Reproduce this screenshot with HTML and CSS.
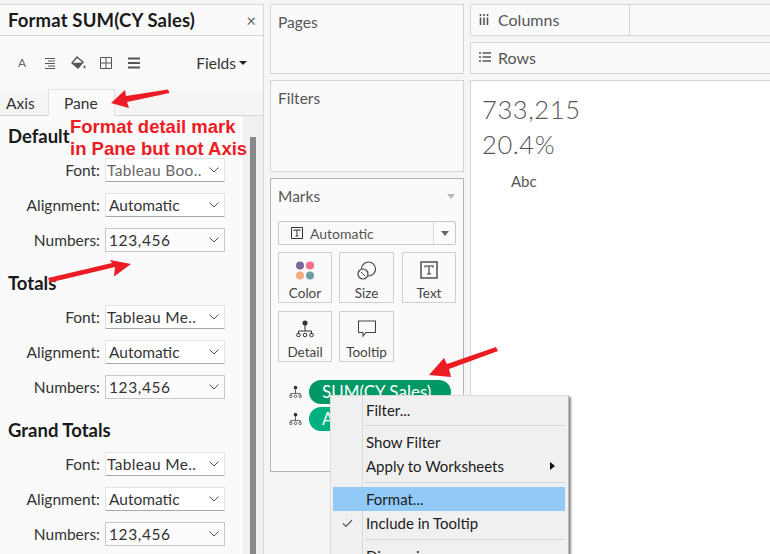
FILE: index.html
```html
<!DOCTYPE html>
<html lang="en">
<head>
<meta charset="utf-8">
<title>Format SUM(CY Sales)</title>
<link rel="stylesheet" href="styles.css">
</head>
<body>
<div class="app">
  <aside class="format">
    <header class="format-head"><h1>Format SUM(CY Sales)</h1><span class="close">×</span></header>
    <div class="tools">
      <span class="tool-box tool-a">A</span>
      <span class="tool-box"><svg width="12" height="12" viewBox="0 0 12 12"><path d="M1 1.500h10M4 4h7M1 6.500h10M4 9h7M1 11.500h10" stroke="#555" fill="none"/></svg></span>
      <span class="tool-box"><svg width="15" height="14" viewBox="0 0 15 14"><path d="M6 1l6 5-5 6-6-5z" fill="none" stroke="#555" stroke-width="1.400"/><path d="M1.500 7l10.500-.5-5 5.500z" fill="#555"/><path d="M13.500 9c.8 1.200 1 1.600 1 2.200a1 1 0 0 1-2 0c0-.6.2-1 1-2.200z" fill="#555"/></svg></span>
      <span class="tool-box"><svg width="12" height="12" viewBox="0 0 12 12"><path d="M.5.500h11v11H.5zM6 .5v11M.5 6h11" stroke="#555" fill="none"/></svg></span>
      <span class="tool-box"><svg width="12" height="12" viewBox="0 0 12 12"><path d="M0 1.500h12M0 6h12M0 10.500h12" stroke="#555" stroke-width="2" fill="none"/></svg></span>
      <span class="fields">Fields<i class="caret"></i></span>
    </div>
    <nav class="tabs"><span class="tab">Axis</span><span class="tab tab-on">Pane</span></nav>
    <div class="format-body">
      <div class="sections">
        <section class="sec">
          <h2>Default</h2>
          <div class="row"><label>Font:</label><div class="sel sel-font"><span class="muted">Tableau Boo..</span><svg class="chev" width="10" height="6" viewBox="0 0 10 6"><path d="M.5.500L5 5l4.500-4.500" fill="none" stroke="#555"/></svg></div></div>
          <div class="row"><label>Alignment:</label><div class="sel"><span>Automatic</span><svg class="chev" width="10" height="6" viewBox="0 0 10 6"><path d="M.5.500L5 5l4.500-4.500" fill="none" stroke="#555"/></svg></div></div>
          <div class="row"><label>Numbers:</label><div class="sel sel-box"><span>123,456</span><svg class="chev" width="10" height="6" viewBox="0 0 10 6"><path d="M.5.500L5 5l4.500-4.500" fill="none" stroke="#555"/></svg></div></div>
        </section>
        <section class="sec">
          <h2>Totals</h2>
          <div class="row"><label>Font:</label><div class="sel sel-font"><span>Tableau Me..</span><svg class="chev" width="10" height="6" viewBox="0 0 10 6"><path d="M.5.500L5 5l4.500-4.500" fill="none" stroke="#555"/></svg></div></div>
          <div class="row"><label>Alignment:</label><div class="sel"><span>Automatic</span><svg class="chev" width="10" height="6" viewBox="0 0 10 6"><path d="M.5.500L5 5l4.500-4.500" fill="none" stroke="#555"/></svg></div></div>
          <div class="row"><label>Numbers:</label><div class="sel sel-box"><span>123,456</span><svg class="chev" width="10" height="6" viewBox="0 0 10 6"><path d="M.5.500L5 5l4.500-4.500" fill="none" stroke="#555"/></svg></div></div>
        </section>
        <section class="sec">
          <h2>Grand Totals</h2>
          <div class="row"><label>Font:</label><div class="sel sel-font"><span>Tableau Me..</span><svg class="chev" width="10" height="6" viewBox="0 0 10 6"><path d="M.5.500L5 5l4.500-4.500" fill="none" stroke="#555"/></svg></div></div>
          <div class="row"><label>Alignment:</label><div class="sel"><span>Automatic</span><svg class="chev" width="10" height="6" viewBox="0 0 10 6"><path d="M.5.500L5 5l4.500-4.500" fill="none" stroke="#555"/></svg></div></div>
          <div class="row"><label>Numbers:</label><div class="sel sel-box"><span>123,456</span><svg class="chev" width="10" height="6" viewBox="0 0 10 6"><path d="M.5.500L5 5l4.500-4.500" fill="none" stroke="#555"/></svg></div></div>
        </section>
      </div>
      <div class="track"><div class="thumb"></div></div>
    </div>
  </aside>

  <div class="shelves">
    <section class="card card-pages">Pages</section>
    <section class="card card-filters">Filters</section>
    <section class="card card-marks">
      <div class="marks-head"><span>Marks</span><i class="tri"></i></div>
      <div class="marks-type">
        <svg width="12" height="12" viewBox="0 0 12 12"><path d="M.5.500h11v11H.5z" fill="none" stroke="#333"/><path d="M3 4V3h6v1M6 3v6M4.500 9h3" fill="none" stroke="#333"/></svg>
        <span class="type-name">Automatic</span>
        <span class="type-drop"><i class="tri tri-dark"></i></span>
      </div>
      <div class="mark-grid">
        <div class="mark-btn">
          <svg width="20" height="20" viewBox="0 0 20 20"><circle cx="5" cy="4.500" r="4" fill="#7b6a99"/><circle cx="15" cy="4.500" r="4" fill="#f0708a"/><circle cx="5" cy="14.500" r="4" fill="#f2ab80"/><circle cx="15" cy="14.500" r="4" fill="#6f9ea8"/></svg>
          <span>Color</span>
        </div>
        <div class="mark-btn">
          <svg width="20" height="20" viewBox="0 0 20 20"><circle cx="11.500" cy="8" r="7" fill="none" stroke="#444" stroke-width="1.200"/><circle cx="6" cy="13" r="5" fill="#fafafa" stroke="#444" stroke-width="1.200"/><path d="M4 11l4 4" stroke="#444"/></svg>
          <span>Size</span>
        </div>
        <div class="mark-btn mark-last">
          <svg width="18" height="18" viewBox="0 0 18 18"><rect x="1" y="1" width="16" height="16" fill="none" stroke="#444" stroke-width="1.400"/><path d="M5 6.500V5h8v1.500M9 5v8M7 13h4" fill="none" stroke="#333" stroke-width="1.100"/></svg>
          <span>Text</span>
        </div>
        <div class="mark-btn">
          <svg width="18" height="18" viewBox="0 0 18 18"><circle cx="9" cy="3" r="2.500" fill="#333"/><path d="M9 5v6M2.500 14v-3h13v3" fill="none" stroke="#333"/><circle cx="2.500" cy="15" r="1.800" fill="none" stroke="#333"/><circle cx="9" cy="15" r="1.800" fill="none" stroke="#333"/><circle cx="15.500" cy="15" r="1.800" fill="none" stroke="#333"/></svg>
          <span>Detail</span>
        </div>
        <div class="mark-btn">
          <svg width="18" height="18" viewBox="0 0 18 18"><path d="M.5 1h17v11.500H8L5 16v-3.500H.5z" fill="none" stroke="#444" stroke-width="1.100"/></svg>
          <span>Tooltip</span>
        </div>
      </div>
      <div class="pills">
        <div class="pill-row">
          <svg width="13" height="14" viewBox="0 0 18 18"><circle cx="9" cy="3" r="2.500" fill="#333"/><path d="M9 5v6M2.500 14v-3h13v3" fill="none" stroke="#333"/><circle cx="2.500" cy="15" r="1.800" fill="none" stroke="#333"/><circle cx="9" cy="15" r="1.800" fill="none" stroke="#333"/><circle cx="15.500" cy="15" r="1.800" fill="none" stroke="#333"/></svg>
          <span class="pill pill-dark">SUM(CY Sales)</span>
        </div>
        <div class="pill-row">
          <svg width="13" height="14" viewBox="0 0 18 18"><circle cx="9" cy="3" r="2.500" fill="#333"/><path d="M9 5v6M2.500 14v-3h13v3" fill="none" stroke="#333"/><circle cx="2.500" cy="15" r="1.800" fill="none" stroke="#333"/><circle cx="9" cy="15" r="1.800" fill="none" stroke="#333"/><circle cx="15.500" cy="15" r="1.800" fill="none" stroke="#333"/></svg>
          <span class="pill pill-light">AGG</span>
        </div>
      </div>
    </section>
  </div>

  <main class="workspace">
    <div class="shelf">
      <div class="shelf-name"><svg width="10" height="11" viewBox="0 0 10 11"><path d="M1.500 0v2M1.500 3.500V11M5 0v2M5 3.500V11M8.500 0v2M8.500 3.500V11" stroke="#555" stroke-width="1.600"/></svg><span>Columns</span></div>
      <div class="shelf-drop"></div>
    </div>
    <div class="shelf">
      <div class="shelf-name"><svg width="12" height="10" viewBox="0 0 12 10"><path d="M0 1h2M3.500 1H12M0 5h2M3.500 5H12M0 9h2M3.500 9H12" stroke="#555" stroke-width="1.500"/></svg><span>Rows</span></div>
    </div>
    <div class="view">
      <div class="big">733,215</div>
      <div class="big big-2">20.4%</div>
      <div class="abc">Abc</div>
    </div>
  </main>
</div>

<div class="menu">
  <div class="menu-item mi-filter">Filter...</div>
  <hr class="hr-first">
  <div class="menu-item">Show Filter</div>
  <div class="menu-item">Apply to Worksheets<i class="sub"></i></div>
  <hr>
  <div class="menu-item menu-hot">Format...</div>
  <div class="menu-item"><svg class="check" width="11" height="9" viewBox="0 0 11 9"><path d="M1 4.500L4 7.500 10 1" fill="none" stroke="#555" stroke-width="1.200"/></svg>Include in Tooltip</div>
  <hr>
  <div class="menu-item">Dimension</div>
</div>

<p class="note">Format detail mark<br>in Pane but not Axis</p>

<svg class="arrows" width="770" height="554" viewBox="0 0 770 554">
  <g fill="#ed1c24">
    <path d="M168 89.500L169.500 93 127 102 129 108 111 103 125 90 126 96z"/>
    <path d="M50 282.500L115 267 114 276.500 131 264 110 260 112 263 48 278z"/>
    <path d="M496 347L498 351 449 369 451 377 429 375 444 358 447 364z"/>
  </g>
</svg>
</body>
</html>
```

FILE: styles.css
```css
* { box-sizing: border-box; }
html, body { margin: 0; height: 554px; overflow: hidden; }
body {
  background: #f5f5f5;
  color: #333;
  font-family: "Lato", "Liberation Sans", sans-serif;
  font-size: 15px;
  position: relative;
}
.app { display: flex; height: 554px; padding-top: 4px; }

/* Format pane */
.format {
  width: 264px;
  flex: none;
  display: flex;
  flex-direction: column;
  border-top: 1px solid #d8d8d8;
  border-right: 1px solid #d8d8d8;
  background: #f6f6f6;
  height: 550px;
}
.format-head {
  height: 31px;
  flex: none;
  display: flex;
  align-items: center;
  justify-content: space-between;
  padding: 0 7px 0 8px;
  border-bottom: 1px solid #d4d4d4;
  background: #fafafa;
}
.format-head h1 { margin: 0; font-size: 18.500px; font-weight: 700; color: #1a1a1a; letter-spacing: .15px; }
.close { font-size: 17px; color: #666; }
.tools {
  height: 53px;
  flex: none;
  display: flex;
  align-items: center;
  padding: 0 16px 0 8px;
  background: #fafafa;
}
.tool-box { width: 28px; flex: none; display: flex; justify-content: center; }
.tool-a { font-size: 12px; color: #666; }
.fields { margin-left: auto; display: flex; align-items: center; gap: 3px; color: #333; font-size: 15.500px; }
.caret { border: 4px solid transparent; border-top: 4px solid #222; border-bottom: 0; width: 0; height: 0; display: block; }
.tabs {
  height: 27px;
  flex: none;
  display: flex;
  align-items: flex-end;
  border-bottom: 1px solid #d4d4d4;
  background: #f5f5f5;
}
.tab { width: 48px; padding: 1px 0 1px 6px; height: 25px; line-height: 25px; font-size: 15.500px; }
.tab-on {
  width: 67px;
  height: 27px;
  margin-bottom: -1px;
  padding: 1px 0 0 15px;
  background: #fafafa;
  border: 1px solid #e0e0e0;
  border-bottom-color: #fafafa;
}
.format-body { flex: 1; display: flex; min-height: 0; }
.sections { width: 243px; flex: none; padding: 10px 0 0 8px; background: #fafafa; overflow: hidden; }
.sec { height: 147px; }
.sec h2 { margin: 0 0 11px; height: 21px; line-height: 21px; font-size: 18.500px; font-weight: 700; color: #1a1a1a; }
.row { display: flex; align-items: center; height: 24px; margin-bottom: 11px; }
.row label { width: 94px; padding-right: 2px; text-align: right; flex: none; margin-right: 3px; font-size: 15.500px; }
.sel {
  width: 120px;
  height: 24px;
  display: flex;
  align-items: center;
  justify-content: space-between;
  padding: 0 5px 0 3px;
  background: #fff;
  border: 1px solid #e4e4e4;
  border-bottom: 1px solid #a8a8a8;
  flex: none;
  font-size: 15.500px;
}
.sel-font { padding-left: 1px; letter-spacing: .3px; }
.sel-box { border: 1px solid #c8c8c8; background: #fbfbfb; letter-spacing: .6px; }
.muted { color: #666; }
.chev { flex: none; }
.track { flex: 1; background: #f0f0f0; padding: 21px 7px 0; }
.thumb { width: 6px; height: 100%; background: #888; }

/* Middle column */
.shelves { width: 194px; margin-left: 6px; flex: none; display: flex; flex-direction: column; gap: 6px; }
.card { background: #fafafa; border: 1px solid #d4d4d4; padding: 8px 7px 0; color: #555; font-size: 15.500px; }
.card-pages { height: 70px; }
.card-filters { height: 92px; }
.card-marks { height: 294px; border-color: #b4b4b4; padding-top: 7px; }
.marks-head { display: flex; justify-content: space-between; align-items: center; height: 20px; padding-right: 1px; }
.tri { display: block; width: 0; height: 0; border: 4px solid transparent; border-top: 5px solid #b8b8b8; border-bottom: 0; }
.tri-dark { border-top-color: #666; }
.marks-type {
  margin-top: 15px;
  height: 24px;
  display: flex;
  align-items: center;
  padding-left: 12px;
  border: 1px solid #c8c8c8;
  border-radius: 2px;
  font-size: 14px;
}
.type-name { margin-left: 7px; flex: 1; }
.type-drop { width: 22px; height: 100%; border-left: 1px solid #d8d8d8; display: flex; align-items: center; justify-content: center; }
.mark-grid { display: grid; grid-template-columns: 54px 55px 55px; column-gap: 7px; row-gap: 8px; margin-top: 7px; }
.mark-btn {
  height: 51px;
  border: 1px solid #d0d0d0;
  display: flex;
  flex-direction: column;
  align-items: center;
  justify-content: space-between;
  padding: 8px 0 1px;
  font-size: 13.500px;
  color: #444;
}
.mark-last { margin-left: 1px; }
.pills { margin-top: 18px; display: flex; flex-direction: column; gap: 3px; }
.pill-row { display: flex; align-items: center; gap: 7px; padding-left: 11px; }
.pill { height: 24px; line-height: 24px; border-radius: 12px; color: #fff; width: 142px; padding-left: 13px; font-size: 17px; }
.pill-dark { background: #009966; }
.pill-light { background: #00b180; }

/* Right column */
.workspace { flex: 1; margin-left: 6px; display: flex; flex-direction: column; min-width: 0; }
.shelf { height: 32px; margin-bottom: 6px; display: flex; background: #fafafa; border: 1px solid #d4d4d4; border-right: 0; font-size: 16px; }
.shelf-name { width: 158px; display: grid; grid-template-columns: 19px 1fr; align-items: center; padding: 0 0 2px 8px; color: #555; }
.shelf-drop { flex: 1; border-left: 1px solid #d4d4d4; }
.view { flex: 1; background: #fff; border: 1px solid #d4d4d4; border-bottom: 0; border-right: 0; padding: 11px 0 0 11px; }
.big { font-size: 25.500px; line-height: 35px; color: #555; font-weight: 300; letter-spacing: .6px; }
.abc { margin: 10px 0 0 29px; font-size: 15px; color: #555; }

/* Context menu */
.menu {
  position: absolute;
  left: 330px;
  top: 395px;
  width: 239px;
  height: 170px;
  padding: 2px 3px 0 2px;
  background: linear-gradient(to right, #f0f0f0 31px, #dadada 31px, #dadada 32px, #f0f0f0 32px);
  border: 1px solid #dcdcdc;
  border-right-color: #bcbcbc;
  box-shadow: 2px 2px 2px #8a8a8a;
  color: #1c1c1c;
  font-size: 15px;
}
.menu-item { height: 24px; line-height: 24px; padding-left: 33px; position: relative; }
.mi-filter { height: 23px; }
.menu hr { height: 1px; border: 0; margin: 4px 0 4px 32px; background: #d4d4d4; }
.menu-hot { background: #91c9f7; }
.sub { position: absolute; right: 10px; top: 8px; width: 0; height: 0; border: 4px solid transparent; border-left: 5px solid #111; border-right: 0; }
.check { position: absolute; left: 9px; top: 8px; }

/* Annotations over the screenshot */
.note {
  position: absolute;
  left: 70px;
  top: 116px;
  margin: 0;
  font: bold 18.500px/22px "Liberation Sans", Arial, sans-serif;
  color: #ed1c24;
}
.arrows { position: absolute; left: 0; top: 0; pointer-events: none; }
```
